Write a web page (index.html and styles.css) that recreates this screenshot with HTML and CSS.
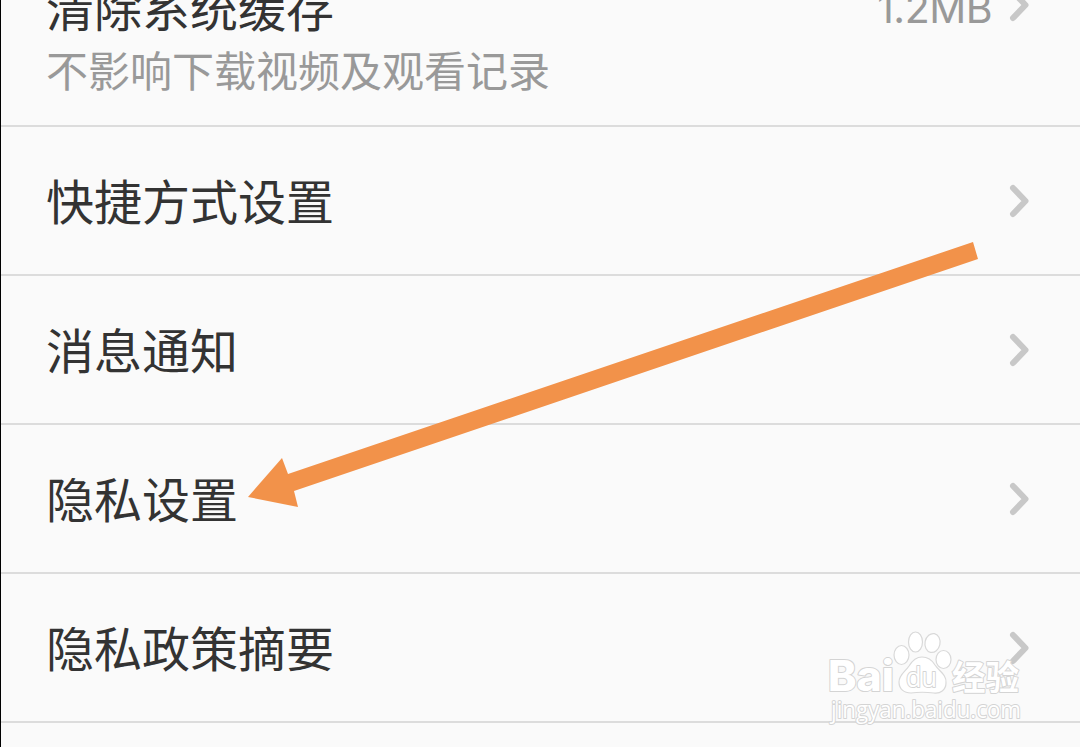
FILE: index.html
```
<!DOCTYPE html>
<html lang="zh-CN">
<head>
  <meta charset="UTF-8" />
  <meta name="viewport" content="width=device-width, initial-scale=1.0"/>
  <title>设置</title>
  <link rel="stylesheet" href="styles.css">
</head>
<body>
  <div class="settings">
    <div class="row row-cache">
      <div class="row-text">
        <div class="row-title">清除系统缓存</div>
        <div class="row-desc">不影响下载视频及观看记录</div>
      </div>
      <div class="row-side">
        <span class="row-value">1.2MB</span>
        <svg class="chevron" viewBox="0 0 22 34"><path d="M5 4 L17.5 17 L5 30"/></svg>
      </div>
    </div>
    <div class="row">
      <div class="row-title">快捷方式设置</div>
      <svg class="chevron" viewBox="0 0 22 34"><path d="M5 4 L17.5 17 L5 30"/></svg>
    </div>
    <div class="row">
      <div class="row-title">消息通知</div>
      <svg class="chevron" viewBox="0 0 22 34"><path d="M5 4 L17.5 17 L5 30"/></svg>
    </div>
    <div class="row">
      <div class="row-title">隐私设置</div>
      <svg class="chevron" viewBox="0 0 22 34"><path d="M5 4 L17.5 17 L5 30"/></svg>
    </div>
    <div class="row">
      <div class="row-title">隐私政策摘要</div>
      <svg class="chevron" viewBox="0 0 22 34"><path d="M5 4 L17.5 17 L5 30"/></svg>
    </div>
  </div>

  <svg class="arrow" viewBox="0 0 740 270">
    <polygon points="8,257 42,218 48,234 733,2 738,19 54,251 58,267"/>
  </svg>

  <svg class="watermark" viewBox="0 0 210 100">
    <g class="wm-shape">
      <ellipse cx="81.5" cy="25" rx="7.5" ry="9.5"/>
      <ellipse cx="95.5" cy="12" rx="7" ry="10"/>
      <ellipse cx="112.5" cy="13" rx="7.5" ry="9.5" transform="rotate(12 112.5 13)"/>
      <ellipse cx="123.5" cy="29.5" rx="7.5" ry="9"/>
      <path d="M102 27 C108 27 112 30 115 35 C119 41 127 45 126 53 C126 60 120 64 114 63 C106 62 98 62 91 63 C84 63 79 59 79 52 C79 45 85 42 89 36 C92 31 96 27 102 27 Z"/>
    </g>
    <text class="wm-text wm-bai" x="8" y="61" textLength="66" lengthAdjust="spacingAndGlyphs">Bai</text>
    <text class="wm-text wm-du" x="86" y="57" textLength="31" lengthAdjust="spacingAndGlyphs">du</text>
    <text class="wm-text wm-cn" x="132" y="60" textLength="67" lengthAdjust="spacingAndGlyphs">经验</text>
    <text class="wm-text wm-url" x="11" y="88" textLength="190" lengthAdjust="spacingAndGlyphs">jingyan.baidu.com</text>
  </svg>
</body>
</html>
```

FILE: styles.css
```
*, *::before, *::after {
  box-sizing: border-box;
}

body {
  margin: 0;
  height: 747px;
  overflow: hidden;
  position: relative;
  background-color: #fafafa;
  font-family: "Noto Sans CJK SC", sans-serif;
  color: #333;
}

.settings {
  height: 747px;
  border-left: 1px solid #000;
}

.row {
  display: flex;
  justify-content: space-between;
  align-items: center;
  height: 149px;
  padding: 1px 50px 0 45px;
  border-bottom: 2px solid #dcdcdc;
}

/* scrolled partly out of view */
.row-cache {
  height: 127px;
  padding-top: 0;
  align-items: flex-end;
  overflow: hidden;
}

.row-title {
  font-size: 48px;
  line-height: 60px;
  margin-bottom: 5px;
}

.row-desc {
  font-size: 42px;
  line-height: 56px;
  color: #999;
}

.row-cache .row-text {
  margin-bottom: 28px;
}

.row-side {
  display: flex;
  align-items: center;
  gap: 16px;
  margin-bottom: 87px;
}

.row-value {
  font-family: Inter, sans-serif;
  font-size: 41px;
  line-height: 60px;
  letter-spacing: -0.5px;
  padding-top: 6px;
  color: #999;
}

.chevron {
  width: 22px;
  height: 34px;
  flex-shrink: 0;
}

.chevron path {
  fill: none;
  stroke: #c8c8c8;
  stroke-width: 6;
  stroke-linecap: round;
  stroke-linejoin: round;
}

.arrow {
  position: absolute;
  left: 240px;
  top: 240px;
  width: 740px;
  height: 270px;
  fill: #f2924a;
}

.watermark {
  position: absolute;
  left: 820px;
  top: 630px;
  width: 210px;
  height: 100px;
}

.wm-shape {
  fill: #fff;
  stroke: #d9d9d9;
  stroke-width: 1.2;
}

.wm-text {
  fill: #fff;
  stroke: #d4d4d4;
  stroke-width: 2;
  stroke-linejoin: round;
  paint-order: stroke;
}

.wm-bai {
  font: 800 42px Inter, sans-serif;
}

.wm-du {
  font: 28px "Open Sans", sans-serif;
}

.wm-cn {
  font: bold 34px "Noto Sans CJK SC", sans-serif;
}

.wm-url {
  font: 23px "Open Sans", sans-serif;
}
```
